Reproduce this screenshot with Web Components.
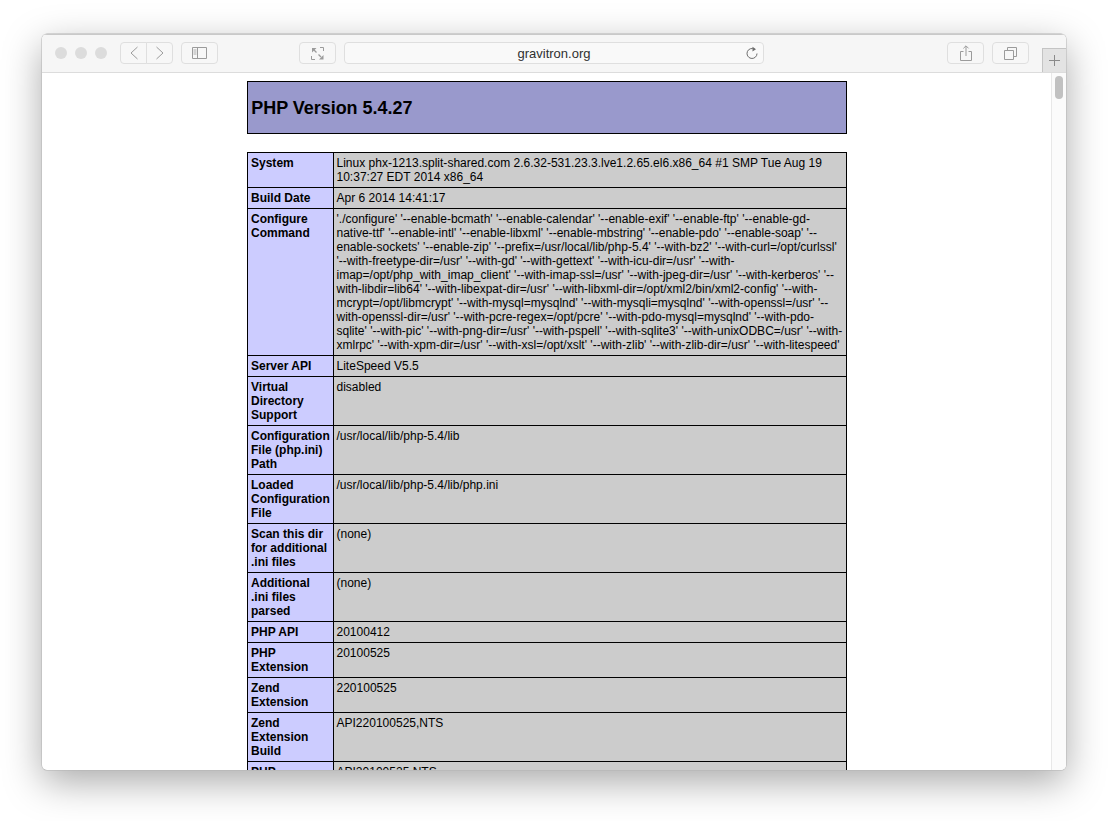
<!DOCTYPE html>
<html>
<head>
<meta charset="utf-8">
<title>gravitron.org</title>
<style>
  html, body { margin: 0; background: #fff; overflow: hidden; }
  body { height: 821px; font-family: "Liberation Sans", Arial, sans-serif; }
</style>
</head>
<body>
<safari-window url="gravitron.org">
  <php-header>PHP Version 5.4.27</php-header>
  <php-table>
    <php-row><b slot="e">System</b>Linux phx-1213.split-shared.com 2.6.32-531.23.3.lve1.2.65.el6.x86_64 #1 SMP Tue Aug 19<br>10:37:27 EDT 2014 x86_64</php-row>
    <php-row><b slot="e">Build Date</b>Apr 6 2014 14:41:17</php-row>
    <php-row><b slot="e">Configure Command</b>'./configure' '--enable-bcmath' '--enable-calendar' '--enable-exif' '--enable-ftp' '--enable-gd-<br>native-ttf' '--enable-intl' '--enable-libxml' '--enable-mbstring' '--enable-pdo' '--enable-soap' '--<br>enable-sockets' '--enable-zip' '--prefix=/usr/local/lib/php-5.4' '--with-bz2' '--with-curl=/opt/curlssl'<br>'--with-freetype-dir=/usr' '--with-gd' '--with-gettext' '--with-icu-dir=/usr' '--with-<br>imap=/opt/php_with_imap_client' '--with-imap-ssl=/usr' '--with-jpeg-dir=/usr' '--with-kerberos' '--<br>with-libdir=lib64' '--with-libexpat-dir=/usr' '--with-libxml-dir=/opt/xml2/bin/xml2-config' '--with-<br>mcrypt=/opt/libmcrypt' '--with-mysql=mysqlnd' '--with-mysqli=mysqlnd' '--with-openssl=/usr' '--<br>with-openssl-dir=/usr' '--with-pcre-regex=/opt/pcre' '--with-pdo-mysql=mysqlnd' '--with-pdo-<br>sqlite' '--with-pic' '--with-png-dir=/usr' '--with-pspell' '--with-sqlite3' '--with-unixODBC=/usr' '--with-<br>xmlrpc' '--with-xpm-dir=/usr' '--with-xsl=/opt/xslt' '--with-zlib' '--with-zlib-dir=/usr' '--with-litespeed'</php-row>
    <php-row><b slot="e">Server API</b>LiteSpeed V5.5</php-row>
    <php-row><b slot="e">Virtual Directory Support</b>disabled</php-row>
    <php-row><b slot="e">Configuration File (php.ini) Path</b>/usr/local/lib/php-5.4/lib</php-row>
    <php-row><b slot="e">Loaded Configuration File</b>/usr/local/lib/php-5.4/lib/php.ini</php-row>
    <php-row><b slot="e">Scan this dir for additional .ini files</b>(none)</php-row>
    <php-row><b slot="e">Additional<br>.ini files parsed</b>(none)</php-row>
    <php-row><b slot="e">PHP API</b>20100412</php-row>
    <php-row><b slot="e">PHP Extension</b>20100525</php-row>
    <php-row><b slot="e">Zend Extension</b>220100525</php-row>
    <php-row><b slot="e">Zend Extension Build</b>API220100525,NTS</php-row>
    <php-row><b slot="e">PHP<br>Extension Build</b>API20100525,NTS</php-row>
  </php-table>
</safari-window>

<script>
class ToolButton extends HTMLElement {
  connectedCallback() {
    this.attachShadow({ mode: "open" });
    this.shadowRoot.innerHTML = `
      <style>
        :host {
          display: flex;
          align-items: center;
          justify-content: center;
          box-sizing: border-box;
          width: 37px;
          height: 22px;
          border: 1px solid #dfdfdf;
          border-radius: 4px;
          background: #f7f7f7;
          flex: none;
        }
      </style>
      <slot></slot>`;
  }
}

class SafariToolbar extends HTMLElement {
  connectedCallback() {
    this.attachShadow({ mode: "open" });
    this.shadowRoot.innerHTML = `
      <style>
        :host {
          display: flex;
          align-items: center;
          box-sizing: border-box;
          position: relative;
          height: 39px;
          padding: 0 0 1px 13px;
          background: #f6f6f6;
          border-top: 1px solid #c9c9c9;
          border-bottom: 1px solid #dcdcdc;
          flex: none;
        }
        .light { width: 12px; height: 12px; border-radius: 50%; background: #dcdcdc; margin-right: 8px; flex: none; }
        .nav { display: flex; margin-left: 5px; }
        .nav tool-button { width: 27px; }
        .nav tool-button:first-child { border-radius: 4px 0 0 4px; }
        .nav tool-button:last-child { margin-left: -1px; border-radius: 0 4px 4px 0; }
        .side { margin-left: 8px; }
        .full { margin-left: 81px; }
        .url {
          display: flex;
          align-items: center;
          justify-content: center;
          position: relative;
          box-sizing: border-box;
          width: 420px;
          height: 22px;
          margin-left: 8px;
          border: 1px solid #dfdfdf;
          border-radius: 4px;
          background: #f9f9f9;
          font: 13px "Liberation Sans", Arial, sans-serif;
          color: #303030;
          flex: none;
        }
        .reload { position: absolute; right: 4px; top: 3px; }
        .share { margin-left: 183px; }
        .tabs { margin-left: 8px; }
        .plus {
          position: absolute;
          right: 0;
          bottom: 0;
          width: 24px;
          height: 24px;
          box-sizing: border-box;
          background: #e3e3e3;
          border-left: 1px solid #c4c4c4;
          border-top: 1px solid #c4c4c4;
          display: flex;
          align-items: center;
          justify-content: center;
        }
        svg { display: block; fill: none; stroke: #9b9b9b; stroke-width: 1; }
      </style>
      <span class="light"></span><span class="light"></span><span class="light"></span>
      <div class="nav">
        <tool-button><svg width="10" height="14"><path d="M8.500 1 2 7l6.500 6"/></svg></tool-button>
        <tool-button><svg width="10" height="14"><path d="M1.500 1 8 7l-6.500 6"/></svg></tool-button>
      </div>
      <tool-button class="side"><svg width="15" height="12"><path d="M.5.5h14v11H.5zM5.500.5v11"/><path d="M1.500 3h3M1.500 5h3M1.500 7h3" stroke-width=".8"/></svg></tool-button>
      <tool-button class="full"><svg width="13" height="13"><path d="M12.500 4V.5H9M.5 9v3.500H4"/><path d="M1 1h4.500L1 5.500zM12.500 12.500H8l4.500-4.500z" fill="#9b9b9b" stroke="none"/><path d="M3 3l2.500 2.500M10 10 7.500 7.500" stroke-width="1.300"/></svg></tool-button>
      <div class="url">gravitron.org
        <svg class="reload" width="14" height="15" style="stroke:#6e6e6e"><path d="M9.600 3.200A5 5 0 1 0 12 7.500"/><path d="M7.500.8 11 3.200 7.500 5.600z" fill="#6e6e6e" stroke="none"/></svg>
      </div>
      <tool-button class="share"><svg width="12" height="16"><path d="M3.500 6.500H.5v9h11v-9h-3"/><path d="M6 11V1M3.400 3.400 6 .8l2.600 2.600"/></svg></tool-button>
      <tool-button class="tabs"><svg width="13" height="13"><path d="M.5 3.500h9v9h-9z"/><path d="M3.500 3.500v-3h9v9h-3"/></svg></tool-button>
      <div class="plus"><svg width="11" height="11" style="stroke:#8a8a8a"><path d="M5.500 0v11M0 5.500h11"/></svg></div>`;
  }
}

class SafariWindow extends HTMLElement {
  connectedCallback() {
    this.attachShadow({ mode: "open" });
    this.shadowRoot.innerHTML = `
      <style>
        :host {
          display: flex;
          flex-direction: column;
          box-sizing: border-box;
          width: 1024px;
          height: 736px;
          margin: 34px 0 0 42px;
          border-radius: 5px;
          background: #fff;
          overflow: hidden;
          box-shadow: 0 0 0 .5px #b4b4b4, 0 12px 38px rgba(0, 0, 0, .34);
          color: #000;
        }
        .body { display: flex; flex: 1; min-height: 0; }
        .page { flex: 1; min-width: 0; overflow: hidden; padding-top: 8px; }
        .bar {
          box-sizing: border-box;
          width: 15px;
          flex: none;
          background: #fbfbfb;
          border-left: 1px solid #e8e8e8;
          padding: 3px 0 0 3px;
        }
        .thumb { width: 8px; height: 23px; border-radius: 4px; background: #c1c1c1; }
      </style>
      <safari-toolbar></safari-toolbar>
      <div class="body">
        <div class="page"><slot></slot></div>
        <div class="bar"><div class="thumb"></div></div>
      </div>`;
  }
}

class PhpHeader extends HTMLElement {
  connectedCallback() {
    this.attachShadow({ mode: "open" });
    this.shadowRoot.innerHTML = `
      <style>
        :host {
          display: flex;
          align-items: center;
          box-sizing: border-box;
          width: 600px;
          height: 53px;
          margin: 0 auto 18px;
          padding: 2px 3px 0 3.700px;
          background: #9999cc;
          border: 1px solid #000;
          font: bold 18px "Liberation Sans", Arial, sans-serif;
          letter-spacing: -.03px;
          color: #000;
        }
      </style>
      <slot></slot>`;
  }
}

class PhpTable extends HTMLElement {
  connectedCallback() {
    this.attachShadow({ mode: "open" });
    this.shadowRoot.innerHTML = `
      <style>
        :host {
          display: flex;
          flex-direction: column;
          box-sizing: border-box;
          width: 600px;
          margin: 0 auto;
          border: 1px solid #000;
          border-bottom: 0;
          font: 12px/14px "Liberation Sans", Arial, sans-serif;
          letter-spacing: .007px;
          color: #000;
        }
      </style>
      <slot></slot>`;
  }
}

class PhpRow extends HTMLElement {
  connectedCallback() {
    this.attachShadow({ mode: "open" });
    this.shadowRoot.innerHTML = `
      <style>
        :host {
          display: grid;
          grid-template-columns: 86px 1fr;
          border-bottom: 1px solid #000;
        }
        .e {
          box-sizing: border-box;
          padding: 3px 2px 3px 3.500px;
          background: #ccccff;
          border-right: 1px solid #000;
        }
        .v {
          padding: 3px;
          background: #cccccc;
          white-space: nowrap;
        }
      </style>
      <div class="e"><slot name="e"></slot></div>
      <div class="v"><slot></slot></div>`;
  }
}

customElements.define("tool-button", ToolButton);
customElements.define("safari-toolbar", SafariToolbar);
customElements.define("safari-window", SafariWindow);
customElements.define("php-header", PhpHeader);
customElements.define("php-table", PhpTable);
customElements.define("php-row", PhpRow);
</script>
</body>
</html>
